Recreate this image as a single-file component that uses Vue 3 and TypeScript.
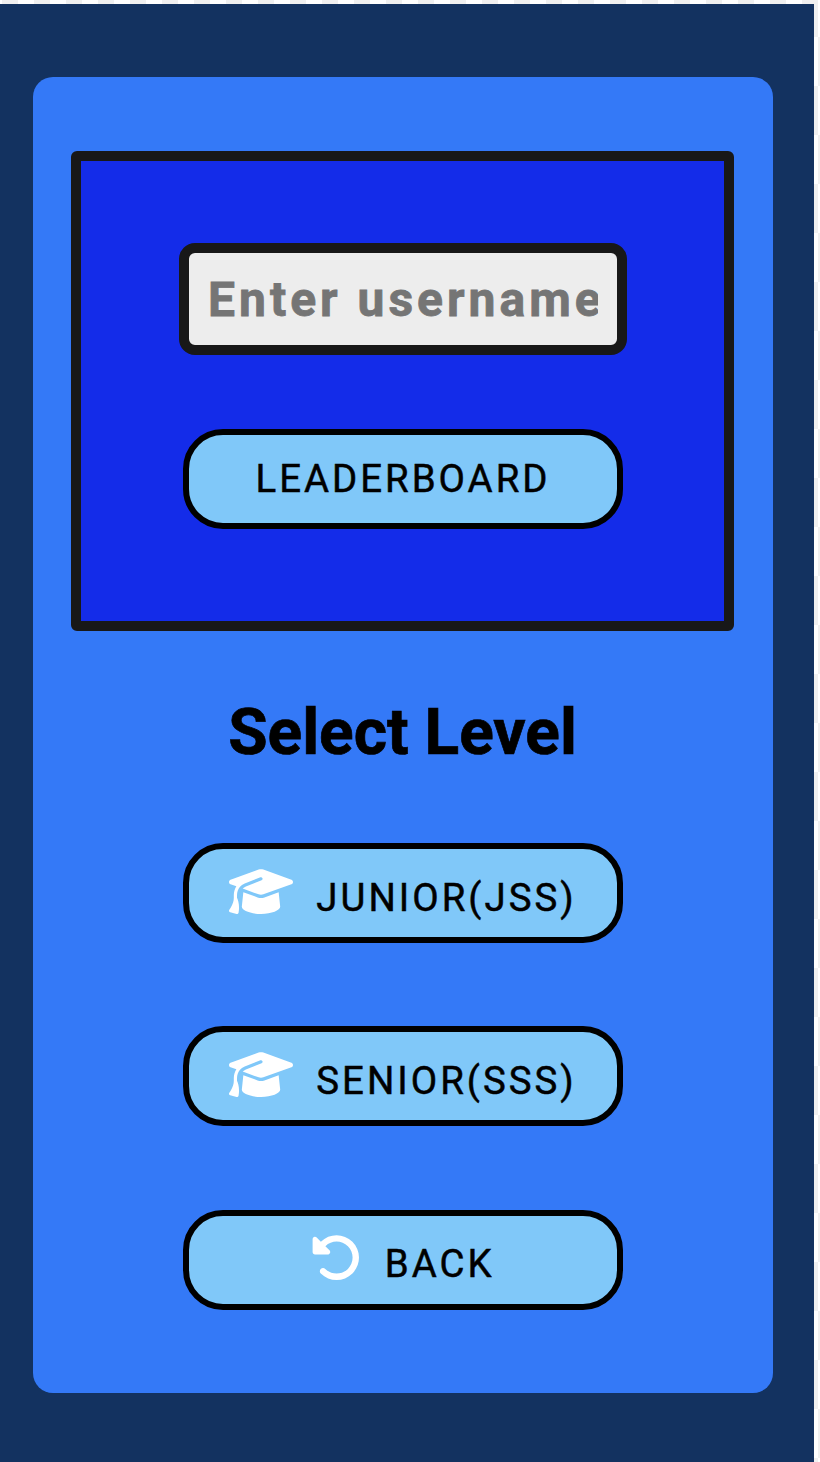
<script setup lang="ts">
import { ref } from 'vue'

interface LevelAction {
  label: string
  icon: 'cap' | 'undo'
}

const username = ref('')
const actions: LevelAction[] = [
  { label: 'JUNIOR(JSS)', icon: 'cap' },
  { label: 'SENIOR(SSS)', icon: 'cap' },
  { label: 'BACK', icon: 'undo' },
]
</script>

<template>
  <div class="page">
    <main class="screen">
      <section class="card">
        <div class="panel">
          <input v-model="username" class="username" type="text" placeholder="Enter username" />
          <button class="btn" type="button"><span class="label">LEADERBOARD</span></button>
        </div>
        <h1 class="title">Select Level</h1>
        <div class="actions">
          <button v-for="action in actions" :key="action.label" class="btn" type="button">
            <svg v-if="action.icon === 'cap'" class="icon cap" viewBox="0 0 640 512" aria-hidden="true">
              <path d="M320 32c-8.1 0-16.1 1.4-23.7 4.1L15.8 137.4C6.3 140.9 0 149.9 0 160s6.3 19.1 15.8 22.6l57.9 20.9C57.3 229.3 48 259.8 48 291.9v28.1c0 28.4-10.8 57.7-22.3 80.8c-6.5 13-13.9 25.8-22.5 37.6C0 442.7-.9 448.3 .9 453.4s6 8.9 11.2 10.2l64 16c4.2 1.1 8.7 .3 12.4-2s6.3-6.1 7.1-10.4c8.6-42.8 4.3-81.2-2.1-108.7C90.3 344.3 86 329.8 80 316.5V291.9c0-30.2 10.2-58.7 27.9-81.5c12.9-15.5 29.6-28 49.2-35.7l157-61.7c8.2-3.2 17.5 .8 20.7 9s-.8 17.5-9 20.7l-157 61.7c-12.4 4.9-23.3 12.4-32.2 21.6l159.6 57.6c7.6 2.7 15.6 4.1 23.7 4.1s16.1-1.4 23.7-4.1L624.2 182.6c9.5-3.4 15.8-12.5 15.8-22.6s-6.3-19.1-15.8-22.6L343.7 36.1C336.1 33.4 328.1 32 320 32zM128 408c0 35.3 86 72 192 72s192-36.7 192-72L496.7 262.6 354.5 314c-11.1 4-22.8 6-34.5 6s-23.5-2-34.5-6L143.3 262.6 128 408z" />
            </svg>
            <svg v-else class="icon undo" viewBox="0 0 512 512" aria-hidden="true">
              <path d="M48.5 224H40c-13.3 0-24-10.7-24-24V72c0-9.7 5.8-18.5 14.8-22.2s19.3-1.7 26.2 5.2L98.6 96.6c87.6-86.5 228.7-86.2 315.8 1c87.5 87.5 87.5 229.3 0 316.8s-229.3 87.5-316.8 0c-12.5-12.5-12.5-32.8 0-45.3s32.8-12.5 45.3 0c62.5 62.5 163.8 62.5 226.3 0s62.5-163.8 0-226.3c-62.2-62.2-162.7-62.5-225.3-1L185 183c6.9 6.9 8.9 17.2 5.2 26.2s-12.5 14.8-22.2 14.8H48.5z" />
            </svg>
            <span class="label">{{ action.label }}</span>
          </button>
        </div>
      </section>
    </main>
  </div>
</template>

<style>
body {
  margin: 0;
}
</style>

<style scoped>
.page {
  box-sizing: border-box;
  width: 820px;
  height: 1462px;
  padding: 4px 6px 0 0;
  overflow: hidden;
  background: conic-gradient(#fff 25%, #f0f0f0 0 50%, #fff 0 75%, #f0f0f0 0) 2px -12px / 32px 98px;
  font-family: Roboto, sans-serif;
}
.screen {
  box-sizing: border-box;
  height: 1458px;
  padding: 73px 41px 0 33px;
  background: #133260;
}
.card {
  box-sizing: border-box;
  height: 1316px;
  padding: 74px 39px 0 38px;
  border-radius: 20px;
  background: #3479f7;
}
.panel {
  box-sizing: border-box;
  height: 480px;
  padding-top: 82px;
  border: 10px solid #181818;
  border-radius: 6px;
  background: #142ce9;
  display: flex;
  flex-direction: column;
  align-items: center;
  gap: 74px;
}
.username {
  box-sizing: border-box;
  flex: none;
  width: 448px;
  height: 112px;
  margin: 0;
  padding: 0 18.5px 0 19.5px;
  border: 10px solid #181818;
  border-radius: 16px;
  outline: none;
  background: #ededed;
  color: #181818;
  font: 700 48px Roboto, sans-serif;
  letter-spacing: 4px;
}
.username::placeholder {
  color: #757575;
  opacity: 1;
  -webkit-text-stroke: 0.8px #757575;
}
.btn {
  box-sizing: border-box;
  flex: none;
  width: 440px;
  height: 100px;
  margin: 0;
  padding: 0 0 0 1px;
  border: 6px solid #000;
  border-radius: 40px;
  background: #80c8f9;
  color: #000;
  display: flex;
  align-items: center;
  justify-content: center;
  font: 400 38.4px/48px Roboto, sans-serif;
  letter-spacing: 3px;
  -webkit-text-stroke: 0.5px #000;
}
.icon {
  height: 51.2px;
  margin: 0 23px 3.6px 0;
  fill: #fff;
}
.cap {
  width: 64px;
}
.undo {
  width: 51.2px;
  margin-right: 22.4px;
}
.icon + .label {
  padding-top: 9.4px;
}
.title {
  margin: 64px 0 0;
  font-size: 64px;
  font-weight: 700;
  line-height: 76px;
  text-align: center;
  -webkit-text-stroke: 0.7px #000;
}
.actions {
  margin-top: 72px;
  display: flex;
  flex-direction: column;
  align-items: center;
  gap: 83.3px;
}
</style>
